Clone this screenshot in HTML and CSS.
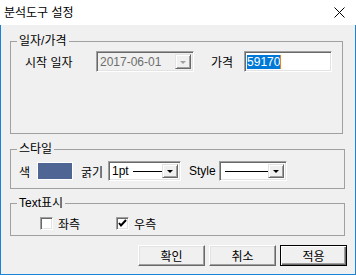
FILE: index.html
```html
<!DOCTYPE html>
<html lang="ko">
<head>
    <meta charset="UTF-8">
    <title>분석도구 설정</title>
    <link rel="stylesheet" href="styles.css">
</head>
<body>

<div class="dialog">
    <div class="titlebar">
        <span class="title">분석도구 설정</span>
        <svg class="close" width="11" height="11" viewBox="0 0 11 11">
            <path d="M0.5 0.5 L10.5 10.5 M10.5 0.5 L0.5 10.5" stroke="#000" stroke-width="1" fill="none"/>
        </svg>
    </div>

    <div class="dialog-body">
        <div class="group group-price">
            <span class="group-title">일자/가격</span>
            <div class="row row-price">
                <span class="label label-date">시작 일자</span>
                <div class="combo combo-date disabled">
                    <span class="combo-value">2017-06-01</span>
                    <span class="drop"><span class="arrow"></span></span>
                </div>
                <span class="label label-price">가격</span>
                <div class="edit">
                    <span class="selected">59170</span><span class="caret"></span>
                </div>
            </div>
        </div>

        <div class="group group-style">
            <span class="group-title">스타일</span>
            <div class="row row-style">
                <span class="label label-color">색</span>
                <span class="swatch"></span>
                <span class="label label-width">굵기</span>
                <div class="combo combo-width">
                    <span class="combo-value">1pt <span class="line line-short"></span></span>
                    <span class="drop"><span class="arrow"></span></span>
                </div>
                <span class="label label-line">Style</span>
                <div class="combo combo-line">
                    <span class="combo-value"><span class="line line-long"></span></span>
                    <span class="drop"><span class="arrow"></span></span>
                </div>
            </div>
        </div>

        <div class="group group-text">
            <span class="group-title">Text표시</span>
            <div class="row row-check">
                <label class="check"><span class="box"></span>좌측</label>
                <label class="check"><span class="box">
                    <svg width="9" height="9" viewBox="0 0 9 9"><path d="M1 4 L3 6.5 L8 1" stroke="#000" stroke-width="2" fill="none"/></svg>
                </span>우측</label>
            </div>
        </div>

        <div class="buttons">
            <button class="btn">확인</button>
            <button class="btn">취소</button>
            <button class="btn default">적용</button>
        </div>
    </div>
</div>

</body>
</html>
```

FILE: styles.css
```css
body {
    margin: 0;
    font-family: "Liberation Sans", "Noto Sans CJK KR", sans-serif;
    font-size: 12px;
    color: #000;
    background: #f0f0f0;
}

.dialog {
    width: 356px;
    height: 275px;
}

.titlebar {
    height: 25px;
    background: #fff;
    display: flex;
    align-items: center;
    justify-content: space-between;
    padding: 0 11px 0 4px;
    box-sizing: border-box;
}

.title {
    font-size: 12px;
    line-height: 14px;
}

.dialog-body {
    height: 250px;
    background: #f0f0f0;
    border: 1px solid #1883d7;
    border-top: 0;
    box-sizing: border-box;
    padding: 16px 0 0 9px;
}

/* group boxes */
.group {
    border: 1px solid #a0a0a0;
    box-sizing: border-box;
}

.group-price {
    width: 333px;
    height: 93px;
}

.group-style {
    width: 335px;
    height: 40px;
    margin-top: 15px;
}

.group-text {
    width: 335px;
    height: 33px;
    margin-top: 14px;
}

.group-title {
    display: block;
    width: fit-content;
    margin: -8px 0 0 6px;
    padding: 0 2px;
    background: #f0f0f0;
    line-height: 14px;
}

.row {
    display: flex;
    align-items: center;
}

.row > * {
    flex-shrink: 0;
}

.row-price {
    height: 21px;
    margin-top: 3px;
    padding-left: 14px;
}

.label-date {
    width: 71px;
}

.label-price {
    margin: 0 11px 0 17px;
}

.row-style {
    height: 20px;
    margin-top: 5px;
    padding-left: 8px;
}

.label-color {
    width: 18px;
}

.label-width {
    width: 27px;
}

.label-line {
    width: 30px;
    margin-left: 8px;
}

/* sunken fields */
.combo,
.edit,
.box {
    border: 1px solid;
    border-color: #a0a0a0 #fff #fff #a0a0a0;
    box-shadow: inset 1px 1px #696969, inset -1px -1px #e3e3e3;
    background: #fff;
    box-sizing: border-box;
}

.combo {
    display: flex;
    align-items: stretch;
    height: 21px;
    padding: 2px;
}

.combo-date {
    width: 98px;
}

.combo-width {
    width: 73px;
    height: 20px;
}

.combo-line {
    width: 68px;
    height: 20px;
}

.combo.disabled {
    background: #f0f0f0;
    color: #6d6d6d;
}

.combo-value {
    flex: 1;
    display: flex;
    align-items: center;
    padding-left: 1px;
    white-space: nowrap;
    overflow: hidden;
}

.line {
    display: inline-block;
    border-top: 1px solid #000;
    margin-left: 4px;
}

.line-short {
    width: 30px;
}

.line-long {
    width: 43px;
    margin-left: 2px;
}

.drop {
    width: 16px;
    display: flex;
    align-items: center;
    justify-content: center;
    background: #f0f0f0;
    border: 1px solid;
    border-color: #e3e3e3 #696969 #696969 #e3e3e3;
    box-shadow: inset 1px 1px #fff, inset -1px -1px #a0a0a0;
    box-sizing: border-box;
}

.arrow {
    width: 0;
    height: 0;
    border-left: 3px solid transparent;
    border-right: 3px solid transparent;
    border-top: 3px solid #000;
    margin-top: 1px;
}

.disabled .arrow {
    border-top-color: #a0a0a0;
}

.edit {
    width: 88px;
    height: 21px;
    display: flex;
    align-items: center;
    padding-left: 2px;
}

.selected {
    background: #0078d7;
    color: #fff;
    line-height: 14px;
}

.caret {
    width: 1px;
    height: 14px;
    background: #f08020;
}

.swatch {
    width: 36px;
    height: 18px;
    background: #4f6593;
    border: 1px solid #fff;
    box-sizing: border-box;
    margin-right: 8px;
}

/* checkboxes */
.row-check {
    height: 13px;
    margin-top: 7px;
    padding-left: 29px;
}

.check {
    display: flex;
    align-items: center;
    margin-right: 36px;
}

.box {
    width: 13px;
    height: 13px;
    margin-right: 5px;
    display: flex;
    align-items: center;
    justify-content: center;
}

/* buttons */
.buttons {
    display: flex;
    justify-content: flex-end;
    gap: 4px;
    margin-top: 9px;
    padding-right: 8px;
}

.btn {
    width: 67px;
    height: 21px;
    font: inherit;
    background: #f0f0f0;
    border: 1px solid;
    border-color: #fff #696969 #696969 #fff;
    box-shadow: inset -1px -1px #a0a0a0, inset 1px 1px #e3e3e3;
    padding: 0;
}

.btn.default {
    border: 1px solid #000;
    box-shadow: inset 1px 1px #fff, inset -1px -1px #696969, inset -2px -2px #a0a0a0;
}
```
